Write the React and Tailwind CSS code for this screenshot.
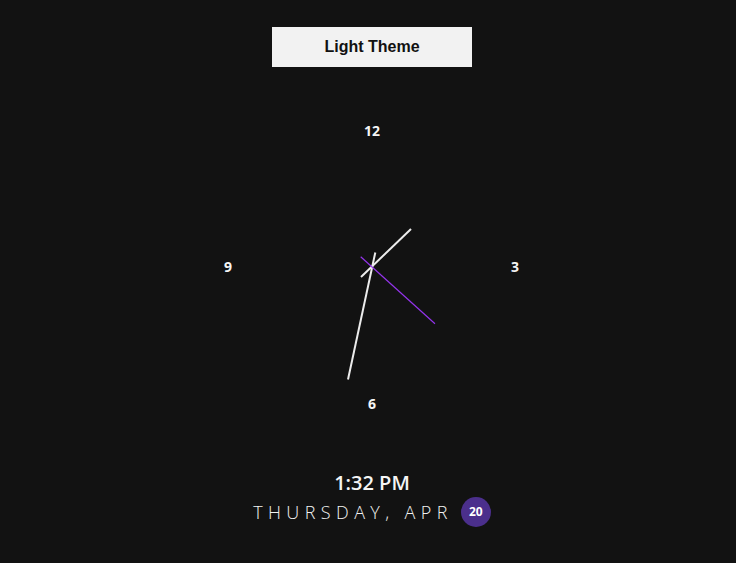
import React from 'react';

const numbers = [
  { label: '12', x: 150, y: 14 },
  { label: '3', x: 293, y: 150 },
  { label: '6', x: 150, y: 287 },
  { label: '9', x: 6, y: 150 },
];

const Clock = () => (
  <svg width="300" height="300" viewBox="0 0 300 300" className="block">
    {numbers.map((n) => (
      <text
        key={n.label}
        x={n.x}
        y={n.y}
        textAnchor="middle"
        dominantBaseline="central"
        fill="#f5f5f5"
        fontSize="14"
        fontWeight="700"
        fontFamily="'Noto Sans', 'Open Sans', sans-serif"
      >
        {n.label}
      </text>
    ))}
    {/* hour */}
    <line x1="139" y1="161" x2="189" y2="113" stroke="#ececec" strokeWidth="2" />
    {/* minute */}
    <line x1="153.3" y1="136.5" x2="126" y2="263.5" stroke="#ececec" strokeWidth="2" />
    {/* second */}
    <line x1="138.7" y1="140.7" x2="213" y2="207.7" stroke="#9333ea" strokeWidth="1.2" />
  </svg>
);

export default function App() {
  return (
    <div className="min-h-[563px] w-full bg-[#121212] pl-2 flex flex-col items-center">
      <button className="mt-[27px] h-10 w-[200px] bg-[#f2f2f2] text-[#111] text-[16px] font-bold font-['Liberation_Sans',Arial,sans-serif]">
        Light Theme
      </button>
      <div className="mt-[49px]">
        <Clock />
      </div>
      <div className="mt-[53px] text-[20px] leading-7 font-semibold text-[#f5f5f5] font-['Open_Sans',sans-serif]">
        1:32 PM
      </div>
      <div className="flex items-center h-[30px]">
        <span className="text-[18px] font-light tracking-[0.3em] text-[#f2f2f2] font-['Open_Sans',sans-serif]">
          THURSDAY, APR
        </span>
        <span className="ml-2 w-[30px] h-[30px] rounded-full bg-[#4b2f8c] text-white text-[12px] font-bold flex items-center justify-center font-['Noto_Sans',sans-serif]">
          20
        </span>
      </div>
    </div>
  );
}
